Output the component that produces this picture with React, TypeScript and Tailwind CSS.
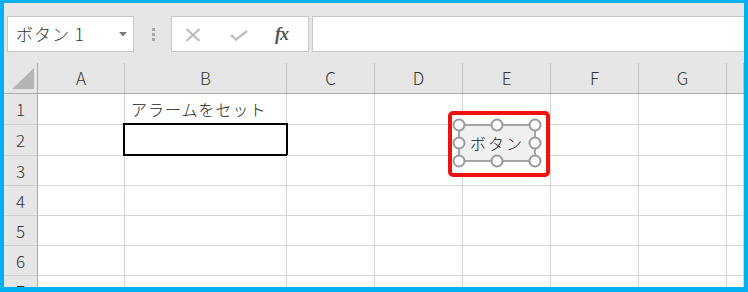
import React from "react";

const cols = [
  { label: "A", w: "w-[87px]" },
  { label: "B", w: "w-[162px]" },
  { label: "C", w: "w-[88px]" },
  { label: "D", w: "w-[88px]" },
  { label: "E", w: "w-[88px]" },
  { label: "F", w: "w-[88px]" },
  { label: "G", w: "w-[88px]" },
  { label: "", w: "flex-1" },
];

const rows = [
  { n: "1", h: "h-[31px]" },
  { n: "2", h: "h-[31px]" },
  { n: "3", h: "h-[30px]" },
  { n: "4", h: "h-[30px]" },
  { n: "5", h: "h-[30px]" },
  { n: "6", h: "h-[30px]" },
  { n: "7", h: "h-[30px]" },
];

function NameBox() {
  return (
    <div className="w-[127px] h-[36px] bg-white border border-[#c6c6c6] flex items-center justify-between pl-[8px] pr-[6px]">
      <span className="text-[17px] font-light text-[#333] tracking-[1px]">ボタン 1</span>
      <svg width="8" height="5" viewBox="0 0 8 5">
        <path d="M0 0 L8 0 L4 4.5 Z" fill="#777" />
      </svg>
    </div>
  );
}

function FormulaButtons() {
  return (
    <div className="w-[138px] h-[36px] bg-white border border-[#c6c6c6] flex items-center pl-[13px]">
      <svg width="16" height="14" viewBox="0 0 16 14" className="mt-[1px]">
        <path d="M1.5 1 L14.5 13 M14.5 1 L1.5 13" stroke="#b8b8b8" strokeWidth="1.8" fill="none" />
      </svg>
      <svg width="18" height="11" viewBox="0 0 18 11" className="ml-[29px] mt-[3px]">
        <path d="M1 5 L6 9.5 L17 1" stroke="#c0c0c0" strokeWidth="2.4" fill="none" />
      </svg>
      <span className="ml-[27px] text-[18px] italic font-bold text-[#555] font-['Liberation_Serif',serif] leading-none tracking-[-1px]">
        fx
      </span>
    </div>
  );
}

function Toolbar() {
  return (
    <div className="h-[60px] flex items-start pt-[13px] pl-[3px]">
      <NameBox />
      <div className="w-[37px] h-[36px] flex flex-col items-center justify-center gap-[2px] pl-[2px]">
        <div className="w-[3px] h-[3px] bg-[#a6a6a6]" />
        <div className="w-[3px] h-[3px] bg-[#a6a6a6]" />
        <div className="w-[3px] h-[3px] bg-[#a6a6a6]" />
      </div>
      <FormulaButtons />
      <div className="flex-1 h-[36px] ml-[3px] bg-white border border-[#c6c6c6] border-r-0" />
    </div>
  );
}

function ButtonShape() {
  return (
    <div className="absolute left-[444px] top-[48px] w-[102px] h-[66px]">
      <svg width="102" height="66" viewBox="0 0 102 66" className="absolute inset-0">
        <rect x="2" y="2" width="98" height="62" rx="3" fill="white" stroke="#ec1212" strokeWidth="4" />
        <rect x="11" y="14" width="76" height="36" fill="#f0f0f0" stroke="#8a8a8a" strokeWidth="1.5" />
        {[11, 49, 87].map((x) =>
          [14, 32, 50].map((y) =>
            x === 49 && y === 32 ? null : (
              <circle key={`${x}-${y}`} cx={x} cy={y} r="5.5" fill="white" stroke="#9a9a9a" strokeWidth="2" />
            )
          )
        )}
      </svg>
      <div className="absolute left-[11px] top-[14px] w-[76px] h-[36px] flex items-center justify-center text-[16px] font-light tracking-[2px] text-[#222]">
        ボタン
      </div>
    </div>
  );
}

export default function App() {
  return (
    <div className="w-[748px] h-[292px] overflow-hidden border-l-4 border-r-4 border-t-[3px] border-b-[5px] border-[#00b0f0] bg-[#e6e6e6] font-['Noto_Sans_CJK_JP',sans-serif]">
      <Toolbar />
      <div className="relative bg-white">
        <div className="flex h-[31px] bg-[#e6e6e6] border-b border-[#ababab]">
          <div className="w-[34px] shrink-0 border-r border-[#ababab] relative">
            <svg width="23" height="22" viewBox="0 0 23 22" className="absolute left-[8px] top-[5px]">
              <path d="M22 0 L22 21 L0 21 Z" fill="#b4b4b4" />
            </svg>
          </div>
          {cols.map((c, i) => (
            <div
              key={i}
              className={`${c.w} shrink-0 border-r border-[#c2c2c2] flex items-center justify-center text-[17px] font-light text-[#333]`}
            >
              {c.label}
            </div>
          ))}
        </div>
        {rows.map((r) => (
          <div key={r.n} className={`flex ${r.h}`}>
            <div className="w-[34px] shrink-0 bg-[#e6e6e6] border-r border-[#ababab] border-b border-b-[#cfcfcf] flex items-center justify-center text-[17px] font-light text-[#333]">
              {r.n}
            </div>
            {cols.map((c, i) => (
              <div
                key={i}
                className={`${c.w} shrink-0 border-r border-b border-[#d4d4d4] relative flex items-center`}
              >
                {r.n === "1" && i === 1 && (
                  <span className="pl-[6px] text-[16px] font-light tracking-[1px] text-[#222] whitespace-nowrap">
                    アラームをセット
                  </span>
                )}
                {r.n === "2" && i === 1 && (
                  <div className="absolute -top-[2px] -left-[2px] -right-[2px] -bottom-[1px] border-[2.5px] border-black" />
                )}
              </div>
            ))}
          </div>
        ))}
        <ButtonShape />
      </div>
    </div>
  );
}
